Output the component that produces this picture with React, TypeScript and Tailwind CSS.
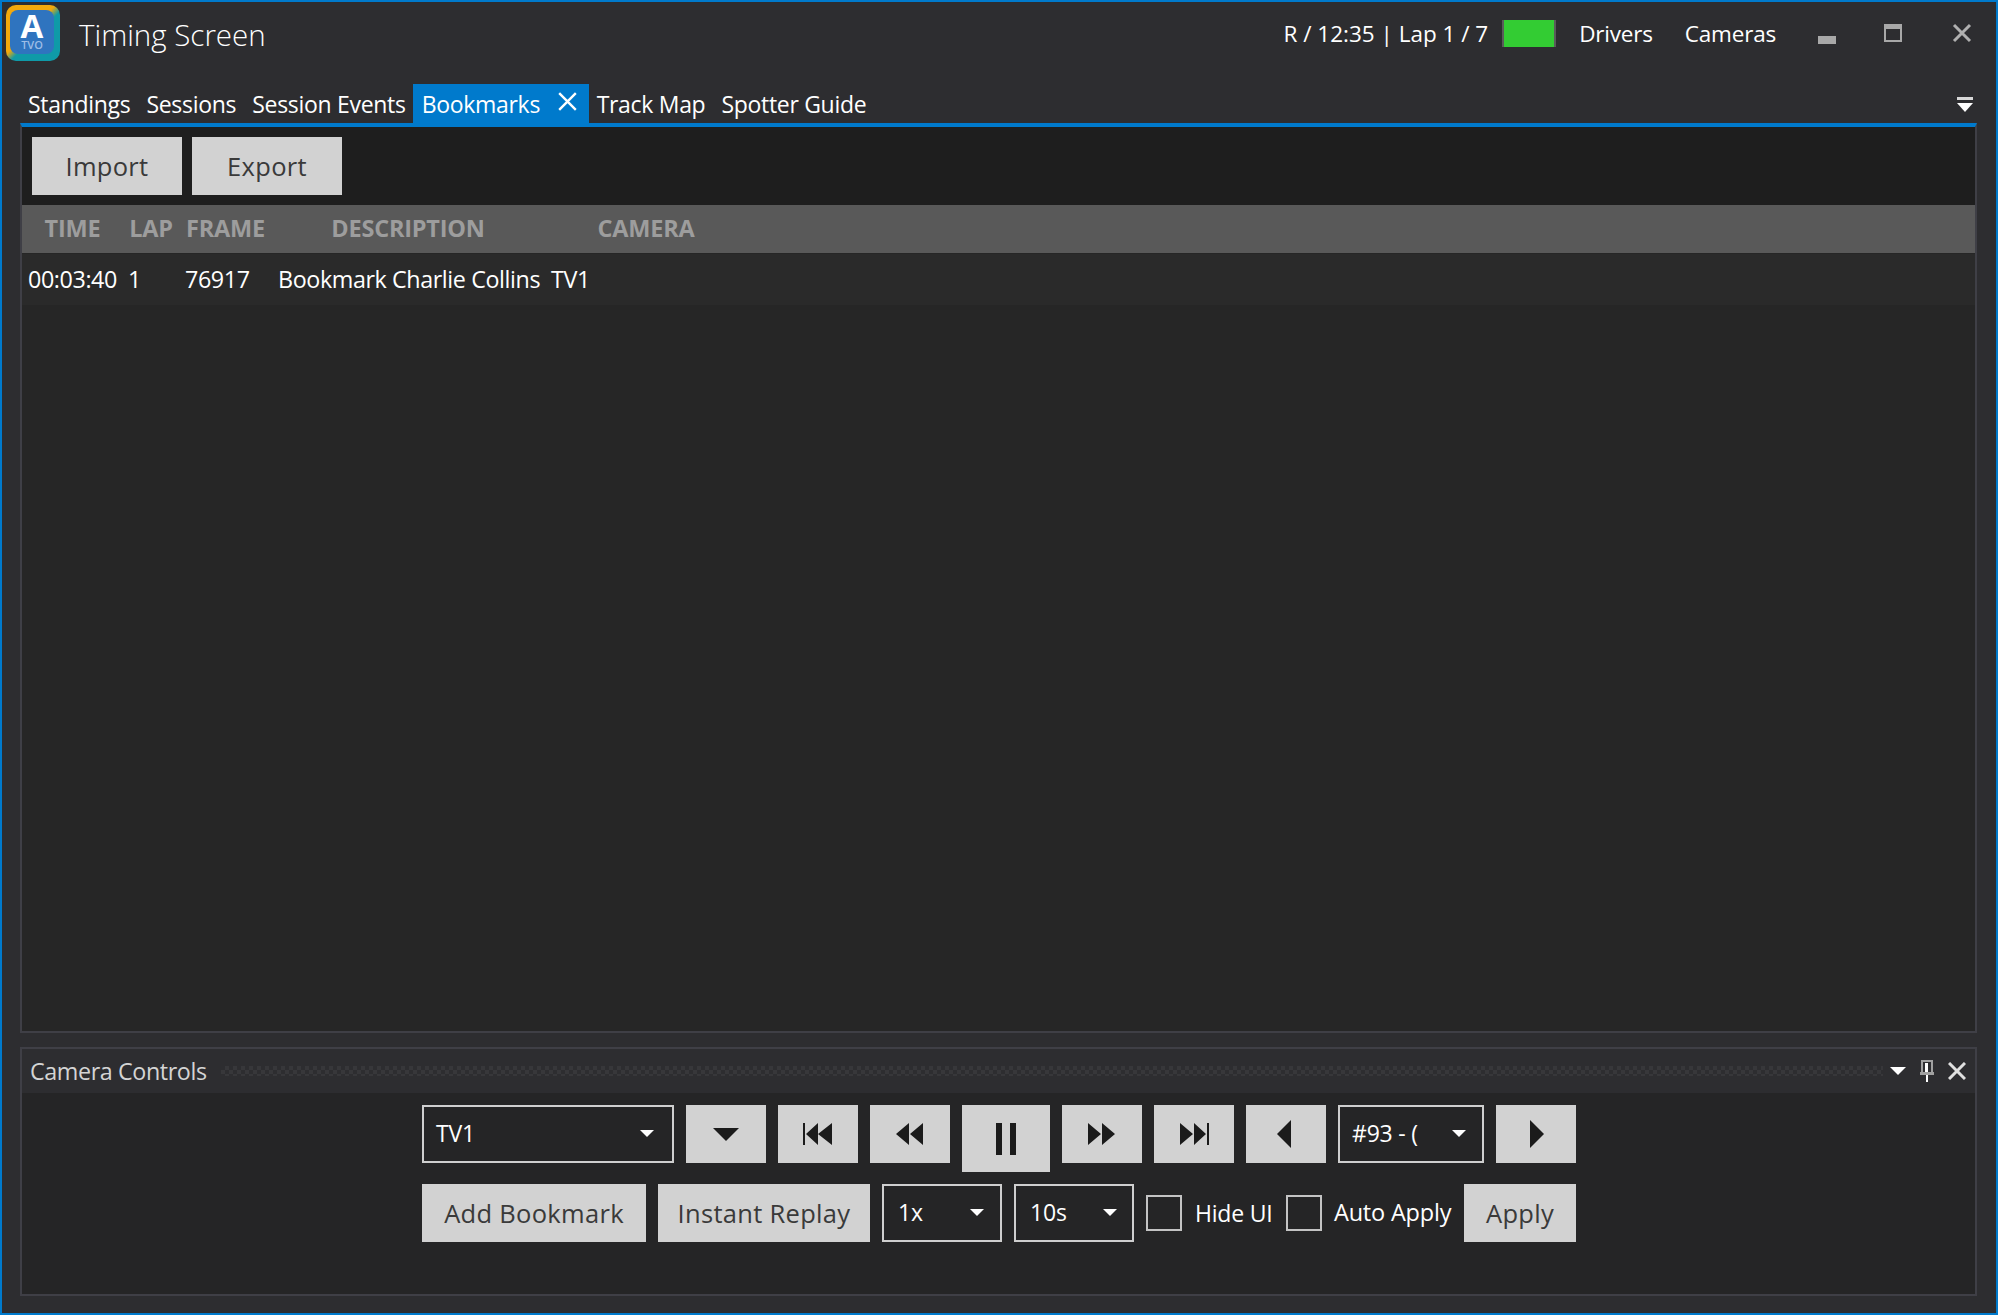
import React from "react";

const font = "font-['Open_Sans',sans-serif]";

function Tri({ dir = "down", className = "" }: { dir?: "down" | "left" | "right"; className?: string }) {
  const pts = dir === "down" ? "0,0 16,0 8,8" : dir === "left" ? "8,0 8,16 0,8" : "0,0 0,16 8,8";
  const vb = dir === "down" ? "0 0 16 8" : "0 0 8 16";
  return (
    <svg viewBox={vb} className={className}>
      <polygon points={pts} fill="currentColor" />
    </svg>
  );
}

function IconBtn({ children, w = "w-[80px]", h = "h-[58px]" }: { children: React.ReactNode; w?: string; h?: string }) {
  return <button className={`${w} ${h} bg-[#d2d2d2] text-[#1b1b1b] flex items-center justify-center shrink-0`}>{children}</button>;
}

function TextBtn({ label, w }: { label: string; w: string }) {
  return (
    <button className={`${w} h-[58px] bg-[#d2d2d2] text-[#3a3a3a] flex items-center justify-center shrink-0 text-[25.5px] tracking-[0.3px] font-['Open_Sans',sans-serif]`}>
      {label}
    </button>
  );
}

function Select({ label, w, h, pl, pr }: { label: string; w: string; h: string; pl: string; pr: string }) {
  return (
    <div className={`${w} ${h} ${pl} ${pr} border-2 border-[#cfcfcf] flex items-center justify-between shrink-0 text-white text-[23px] tracking-[-0.2px]`}>
      <span className="whitespace-pre -mt-[2px]">{label}</span>
      <Tri className="w-[14px] h-[7px] text-white -mt-[2px]" />
    </div>
  );
}

function Checkbox() {
  return <div className="w-[36px] h-[36px] border-2 border-[#c4c4c4] shrink-0" />;
}

function Logo() {
  return (
    <div className="w-[54px] h-[56px] shrink-0 rounded-[10px] bg-[linear-gradient(135deg,#f3a90c_0%,#f3a90c_45%,#0f9aa8_55%,#0f9aa8_100%)] pt-[5px] pl-[4px] pr-[6px] pb-[7px] -mt-[4px]">
      <div className="w-full h-full rounded-[8px] bg-[#2f74bf] flex flex-col items-center pt-[2px]">
        <span className="h-[27px] leading-[27px] text-[33px] font-bold text-white">A</span>
        <span className="h-[12px] leading-[12px] text-[11px] font-semibold text-[#9dbde6]">TVO</span>
      </div>
    </div>
  );
}

const tabs = ["Standings", "Sessions", "Session Events"];

export default function App() {
  return (
    <div className={`w-[1998px] h-[1315px] bg-[#2d2d30] border-2 border-[#007acc] flex flex-col text-white overflow-hidden ${font}`}>
      {/* title bar */}
      <div className="h-[57px] flex items-center shrink-0 pl-[4px] pt-[9px]">
        <Logo />
        <span className="ml-[19px] text-[29.5px] font-light text-white">Timing Screen</span>
        <div className="ml-auto flex items-center -mt-[3px]">
          <span className="text-[22.5px]">R / 12:35 | Lap 1 / 7</span>
          <div className="ml-[14px] w-[54px] h-[27px] bg-[#33cc33] border-x-2 border-[#5a5a5a] -mt-[1px]" />
          <span className="ml-[23px] text-[22.5px] tracking-[-0.2px]">Drivers</span>
          <span className="ml-[32px] text-[22.5px] tracking-[-0.2px]">Cameras</span>
          <div className="ml-[42px] w-[18px] h-[8px] bg-[#a8a8a8] mt-[12px]" />
          <svg viewBox="0 0 18 18" className="ml-[48px] w-[18px] h-[18px] text-[#a8a8a8] -mt-[1px]">
            <path d="M1 1h16v16H1z M1 4h16" fill="none" stroke="currentColor" strokeWidth="2" />
            <rect x="0" y="0" width="18" height="5" fill="currentColor" />
          </svg>
          <svg viewBox="0 0 20 20" className="ml-[50px] mr-[24px] w-[20px] h-[20px] text-[#b0b0b0] -mt-[1px]">
            <path d="M2 2L18 18M18 2L2 18" stroke="currentColor" strokeWidth="3" />
          </svg>
        </div>
      </div>

      {/* tab strip */}
      <div className="h-[39px] mt-[25px] ml-[18px] mr-[19px] flex items-end shrink-0 text-[23px] tracking-[-0.3px] relative">
        <div className="h-[39px] flex items-center gap-[16px] pl-[8px] pr-[7px] pt-[2px]">
          {tabs.map((t) => (
            <span key={t} className="whitespace-nowrap">{t}</span>
          ))}
        </div>
        <div className="h-[39px] w-[176px] bg-[#007acc] flex items-center pl-[9px] pt-[2px] shrink-0">
          <span>Bookmarks</span>
          <svg viewBox="0 0 16 16" className="ml-[18px] w-[19px] h-[19px] -mt-[6px]">
            <path d="M1 1L15 15M15 1L1 15" stroke="#ffffff" strokeWidth="2" />
          </svg>
        </div>
        <div className="h-[39px] flex items-center gap-[16px] pl-[8px] pt-[2px]">
          <span>Track Map</span>
          <span>Spotter Guide</span>
        </div>
        <svg viewBox="0 0 16 16" className="ml-auto mr-[4px] mb-[10px] w-[16px] h-[16px] text-white">
          <rect x="0" y="0" width="16" height="3" fill="#d8d8d8" />
          <polygon points="0,6 16,6 8,15" fill="currentColor" />
        </svg>
      </div>

      {/* document panel */}
      <div className="h-[910px] ml-[18px] mr-[19px] border-t-4 border-[#007acc] shrink-0 bg-[#262626] border-x-2 border-b-2 border-x-[#3f3f46] border-b-[#3f3f46] flex flex-col">
        <div className="h-[78px] bg-[#1e1e1e] flex items-start gap-[10px] pt-[10px] pl-[10px] shrink-0">
          <TextBtn label="Import" w="w-[150px]" />
          <TextBtn label="Export" w="w-[150px]" />
        </div>
        <div className="h-[48px] bg-[#595959] grid grid-cols-[101px_56px_93px_272px_204px] items-center text-[23.5px] font-bold text-[#9d9d9d] shrink-0 tracking-[-0.2px]">
          <span className="text-center">TIME</span>
          <span className="text-center">LAP</span>
          <span className="text-center">FRAME</span>
          <span className="text-center">DESCRIPTION</span>
          <span className="text-center">CAMERA</span>
        </div>
        <div className="h-[51px] mt-[1px] bg-[#2a2a2a] grid grid-cols-[101px_56px_93px_272px_204px] items-center text-[23.3px] tracking-[-0.4px] shrink-0">
          <span className="pl-[6px]">00:03:40</span>
          <span className="pl-[5px]">1</span>
          <span className="pl-[6px]">76917</span>
          <span className="pl-[6px] whitespace-nowrap">Bookmark Charlie Collins</span>
          <span className="pl-[7px]">TV1</span>
        </div>
      </div>

      {/* camera controls */}
      <div className="h-[249px] mt-[14px] ml-[18px] mr-[19px] border-2 border-[#3f3f46] bg-[#252526] shrink-0 flex flex-col">
        <div className="h-[44px] bg-[#2d2d30] flex items-center shrink-0 pl-[8px] pr-[9px]">
          <span className="text-[23.3px] tracking-[-0.4px] text-[#d4d4d4]">Camera Controls</span>
          <div className="flex-1 h-[10px] ml-[14px] mr-[7px] bg-[conic-gradient(#37373a_25%,transparent_0_50%,#37373a_0_75%,transparent_0)] bg-[length:8px_8px]" />
          <svg viewBox="0 0 16 8" className="w-[16px] h-[8px] text-white">
            <polygon points="0,0 16,0 8,8" fill="currentColor" />
          </svg>
          <svg viewBox="0 0 14 22" className="ml-[14px] w-[14px] h-[22px]">
            <rect x="2" y="1" width="10" height="12" fill="none" stroke="#a0a0a0" strokeWidth="2" />
            <rect x="5" y="3" width="3" height="10" fill="#ffffff" />
            <rect x="0" y="12" width="14" height="3" fill="#a0a0a0" />
            <rect x="6" y="15" width="2" height="7" fill="#ffffff" />
          </svg>
          <svg viewBox="0 0 18 18" className="ml-[14px] w-[18px] h-[18px]">
            <path d="M1 1L17 17M17 1L1 17" stroke="#e0e0e0" strokeWidth="3" />
          </svg>
        </div>
        <div className="flex flex-col gap-[12px] pt-[12px] pl-[400px]">
          <div className="flex items-start gap-[12px] h-[67px]">
            <Select label="TV1" w="w-[252px]" h="h-[58px]" pl="pl-[12px]" pr="pr-[18px]" />
            <IconBtn>
              <Tri className="w-[26px] h-[13px]" />
            </IconBtn>
            <IconBtn>
              <svg viewBox="0 0 32 22" className="w-[32px] h-[22px]"><path d="M1 0h2v22H1zM4 11L16 0v22zM16 11L30 0v22z" fill="currentColor" /></svg>
            </IconBtn>
            <IconBtn>
              <svg viewBox="0 0 28 22" className="w-[28px] h-[22px]"><path d="M0 11L13 0v22zM14 11L27 0v22z" fill="currentColor" /></svg>
            </IconBtn>
            <IconBtn w="w-[88px]" h="h-[67px]">
              <svg viewBox="0 0 21 32" className="w-[21px] h-[32px]"><path d="M0 0h6v32H0zM14 0h6v32h-6z" fill="currentColor" /></svg>
            </IconBtn>
            <IconBtn>
              <svg viewBox="0 0 28 22" className="w-[28px] h-[22px]"><path d="M0 0L13 11L0 22zM14 0L27 11L14 22z" fill="currentColor" /></svg>
            </IconBtn>
            <IconBtn>
              <svg viewBox="0 0 32 22" className="w-[32px] h-[22px]"><path d="M2 0L15 11L2 22zM16 0L28 11L16 22zM29 0h2v22h-2z" fill="currentColor" /></svg>
            </IconBtn>
            <IconBtn>
              <Tri dir="left" className="w-[14px] h-[28px] -ml-[4px]" />
            </IconBtn>
            <Select label="#93 - (" w="w-[146px]" h="h-[58px]" pl="pl-[12px]" pr="pr-[16px]" />
            <IconBtn>
              <Tri dir="right" className="w-[14px] h-[28px] ml-[2px]" />
            </IconBtn>
          </div>
          <div className="flex items-center h-[58px]">
            <TextBtn label="Add Bookmark" w="w-[224px]" />
            <div className="w-[12px]" />
            <TextBtn label="Instant Replay" w="w-[212px]" />
            <div className="w-[12px]" />
            <Select label="1x" w="w-[120px]" h="h-[58px]" pl="pl-[14px]" pr="pr-[16px]" />
            <div className="w-[12px]" />
            <Select label="10s" w="w-[120px]" h="h-[58px]" pl="pl-[14px]" pr="pr-[15px]" />
            <div className="w-[12px]" />
            <Checkbox />
            <span className="ml-[13px] text-[23px] tracking-[-0.2px] w-[78px] whitespace-nowrap">Hide UI</span>
            <div className="ml-[13px]"><Checkbox /></div>
            <span className="ml-[12px] text-[23.5px] tracking-[-0.2px] w-[120px] whitespace-nowrap">Auto Apply</span>
            <div className="ml-[10px]"><TextBtn label="Apply" w="w-[112px]" /></div>
          </div>
        </div>
      </div>
    </div>
  );
}
